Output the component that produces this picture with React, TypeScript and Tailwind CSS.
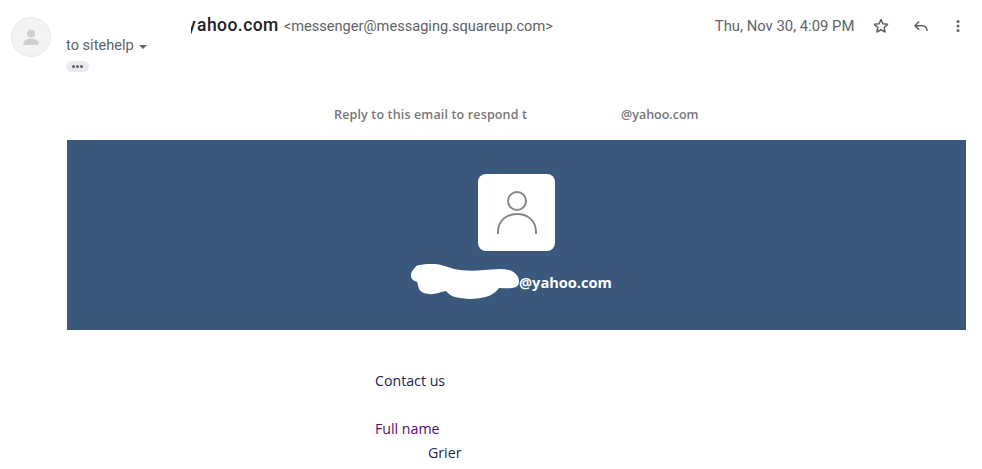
export default function App() {
  return (
    <div className="h-[469px] w-[982px] overflow-hidden bg-white font-['Roboto',sans-serif]">
      {/* message header */}
      <div className="flex h-[140px] flex-col">
        <div className="flex pl-[11px] pt-[17px]">
          <div className="flex h-[40px] w-[40px] shrink-0 items-center justify-center rounded-full border border-[#e8e8e8] bg-[#f3f3f3]">
            <svg width="20" height="20" viewBox="0 0 20 20" fill="#cfcfcf">
              <circle cx="10" cy="6.5" r="4" />
              <path d="M2.5 18v-2.2c0-2.6 5-4 7.5-4s7.5 1.4 7.5 4V18z" />
            </svg>
          </div>

          <div className="ml-[15px] w-[905px]">
            <div className="flex h-[18px] items-center">
              <div className="ml-[125px] flex shrink-0 items-baseline whitespace-nowrap">
                <span className="text-[17.5px] font-medium leading-[18px] tracking-[0.45px] text-[#202124]">
                  <span className="inline-block h-[20px] w-[6px] overflow-hidden align-top">
                    <span className="ml-[-4px]">y</span>
                  </span>
                  ahoo.com
                </span>
                <span className="ml-[5px] text-[14.6px] leading-[18px] text-[#5f6368]">
                  &lt;messenger@messaging.squareup.com&gt;
                </span>
              </div>
              <span className="ml-[162px] shrink-0 whitespace-nowrap text-[14.85px] leading-[18px] text-[#5f6368]">
                Thu, Nov 30, 4:09 PM
              </span>
              <svg className="ml-[18px] shrink-0" width="18" height="18" viewBox="0 0 24 24" fill="none" stroke="#5f6368" strokeWidth="2" strokeLinejoin="round">
                <path d="M12 3.5l2.6 5.6 6.1.7-4.5 4.2 1.2 6-5.4-3-5.4 3 1.2-6-4.5-4.2 6.1-.7z" />
              </svg>
              <svg className="ml-[22px] shrink-0" width="18" height="18" viewBox="0 0 24 24" fill="none" stroke="#5f6368" strokeWidth="2">
                <path d="M9.5 6L4 11.5 9.5 17M4 11.5h10c3.5 0 6 2 6 7" />
              </svg>
              <svg className="ml-[19px] shrink-0" width="18" height="18" viewBox="0 0 24 24" fill="#5f6368">
                <circle cx="12" cy="6" r="2" />
                <circle cx="12" cy="12" r="2" />
                <circle cx="12" cy="18" r="2" />
              </svg>
            </div>

            <div className="mt-[2px] flex h-[18px] items-center text-[14.6px] text-[#5f6368]">
              <span>to sitehelp</span>
              <span className="ml-[5px] mt-[2px] h-0 w-0 border-x-[4px] border-t-[4px] border-x-transparent border-t-[#5f6368]" />
            </div>
            <div className="mt-[6px] flex h-[11px] w-[23px] items-center justify-center gap-[1px] rounded-full bg-[#e8eaed]">
              <span className="h-[3px] w-[3px] rounded-full bg-[#5f6368]" />
              <span className="h-[3px] w-[3px] rounded-full bg-[#5f6368]" />
              <span className="h-[3px] w-[3px] rounded-full bg-[#5f6368]" />
            </div>
          </div>
        </div>

        <div className="ml-[334px] mt-[34px] flex font-['Open_Sans',sans-serif] text-[12.5px] font-semibold leading-[18px] text-[#777777]">
          <span className="w-[193px] overflow-hidden whitespace-nowrap tracking-[0.15px]">Reply to this email to respond to</span>
          <span className="ml-[94px]">@yahoo.com</span>
        </div>
      </div>

      {/* banner */}
      <div className="ml-[67px] flex h-[190px] w-[899px] flex-col items-center bg-[#39587c] pt-[34px]">
        <div className="flex h-[77px] w-[77px] items-center justify-center rounded-[8px] bg-white">
          <svg width="40" height="46" viewBox="0 0 40 46" fill="none" stroke="#858585" strokeWidth="2">
            <circle cx="20" cy="11" r="9" />
            <path d="M1 44v-2c0-11 8-18 19-18s19 7 19 18v2" />
          </svg>
        </div>
        <div className="relative mt-[16px] flex h-[36px] w-[899px] items-center">
          {/* scribbled-out name */}
          <svg className="absolute left-[342px] top-[-3px]" width="112" height="38" viewBox="0 0 112 38" fill="#ffffff">
            <path d="M7 2C13 0 24-1 32 1c5 1 9 3 13 4 10 2 20 2 30 1 7 0 16-2 25 0 6 2 10 6 10 11 0 3-1 5-3 6-5 2-11 1-17 1-2 3-6 6-10 8-6 2-14 3-20 3-6-1-12-1-17-3-2-1-4-3-6-5-6 1-12 4-17 3-5 0-9-3-10-5-1-3-1-5-2-7-3-1-6-3-6-6 0-2 0-4 2-6 1-2 3-3 3-4z" />
          </svg>
          <span className="absolute left-[452px] top-[6px] font-['Open_Sans',sans-serif] text-[14.6px] font-bold leading-[18px] text-white">
            @yahoo.com
          </span>
        </div>
      </div>

      {/* form */}
      <div className="ml-[375px] pt-[41px] font-['Open_Sans',sans-serif] text-[14.2px] leading-[20px]">
        <div className="text-[#221f4f]">Contact us</div>
        <div className="mt-[28px] text-[#5a0a6e]">Full name</div>
        <div className="ml-[53px] mt-[4px] text-[#221f4f]">Grier</div>
      </div>
    </div>
  );
}
